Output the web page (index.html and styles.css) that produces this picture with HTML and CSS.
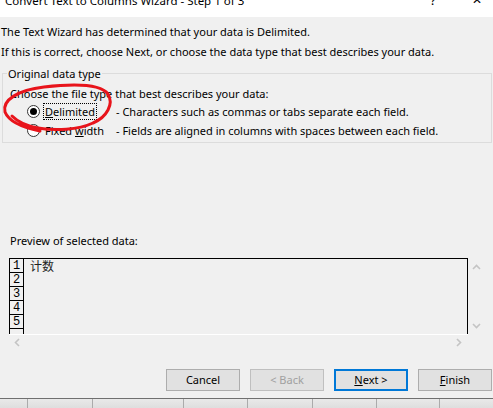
FILE: index.html
```html
<!DOCTYPE html>
<html>
<head>
<meta charset="utf-8">
<link rel="stylesheet" href="styles.css">
</head>
<body>
<div class="screen">
  <div class="dialog">
    <div class="titlebar">
      <span class="title">Convert Text to Columns Wizard - Step 1 of 3</span>
      <span class="tb-btn help">?</span>
      <span class="tb-btn close">✕</span>
    </div>
    <div class="content">
      <p class="intro first">The Text Wizard has determined that your data is Delimited.</p>
      <p class="intro">If this is correct, choose Next, or choose the data type that best describes your data.</p>
      <div class="group">
        <div class="legend">Original data type</div>
        <div class="choose">Choose the file type that best describes your data:</div>
        <div class="radio-row">
          <span class="radio checked"></span>
          <span class="rlabel"><span class="focus"><u>D</u>elimited</span></span>
          <span class="desc">- Characters such as commas or tabs separate each field.</span>
        </div>
        <div class="radio-row">
          <span class="radio"></span>
          <span class="rlabel"><span class="nofocus">Fixed <u>w</u>idth</span></span>
          <span class="desc">- Fields are aligned in columns with spaces between each field.</span>
        </div>
      </div>
      <div class="preview-label">Preview of selected data:</div>
      <div class="preview">
        <div class="pv-box">
          <div class="pv-row"><span class="num">1</span><span class="cell">计数</span></div>
          <div class="pv-row"><span class="num">2</span><span class="cell"></span></div>
          <div class="pv-row"><span class="num">3</span><span class="cell"></span></div>
          <div class="pv-row"><span class="num">4</span><span class="cell"></span></div>
          <div class="pv-row"><span class="num">5</span><span class="cell"></span></div>
          <div class="pv-row partial"><span class="num"></span><span class="cell"></span></div>
        </div>
        <div class="vscroll">
          <svg width="9" height="6" viewBox="0 0 9 6"><path d="M1 5 L4.5 1.5 L8 5" fill="none" stroke="#c4c4c4" stroke-width="1.6"/></svg>
          <svg width="9" height="6" viewBox="0 0 9 6"><path d="M1 1 L4.5 4.5 L8 1" fill="none" stroke="#c4c4c4" stroke-width="1.6"/></svg>
        </div>
        <div class="hscroll">
          <svg width="6" height="9" viewBox="0 0 6 9"><path d="M5 1 L1.5 4.5 L5 8" fill="none" stroke="#c4c4c4" stroke-width="1.6"/></svg>
          <svg width="6" height="9" viewBox="0 0 6 9"><path d="M1 1 L4.5 4.5 L1 8" fill="none" stroke="#c4c4c4" stroke-width="1.6"/></svg>
        </div>
        <div class="corner"></div>
      </div>
      <div class="buttons">
        <button class="btn">Cancel</button>
        <button class="btn disabled">&lt; Back</button>
        <button class="btn default"><u>N</u>ext &gt;</button>
        <button class="btn"><u>F</u>inish</button>
      </div>
    </div>
  </div>
  <div class="sheet">
    <span class="col c0"></span>
    <span class="col c1"></span>
    <span class="col c2"></span>
    <span class="col c3"></span>
    <span class="col c4"></span>
    <span class="col c5"></span>
    <span class="col c6"></span>
    <span class="col c7"></span>
  </div>
  <svg class="annot" width="493" height="408" viewBox="0 0 493 408">
    <path d="M40 131 C25 128 9 122 5 112 C2 100 18 90 44 87 C70 84 100 83 108 94 C114 104 107 117 93 123 C78 130 55 131 38 128 C27 126 18 122 12 116" fill="none" stroke="#e8141b" stroke-width="3" stroke-linecap="round"/>
  </svg>
</div>
</body>
</html>
```
FILE: styles.css
```css
* { box-sizing: border-box; }
html, body { margin: 0; padding: 0; }
body {
  width: 493px;
  height: 408px;
  overflow: hidden;
  background: #f0f0f0;
  font-family: "Noto Sans", "Noto Sans CJK SC", sans-serif;
  font-size: 11px;
  color: #000;
}
.screen {
  position: relative;
  width: 493px;
  height: 408px;
  display: flex;
  flex-direction: column;
}
.dialog {
  height: 399px;
  background: #f0f0f0;
  border-bottom: 1px solid #6f6f6f;
  display: flex;
  flex-direction: column;
}
.titlebar {
  height: 17px;
  background: #fff;
  display: flex;
  align-items: flex-start;
  overflow: hidden;
}
.title {
  margin-top: -9px;
  margin-left: 5px;
  line-height: 20px;
  font-size: 11.5px;
  flex: 1;
}
.tb-btn {
  margin-top: -10px;
  line-height: 20px;
  font-size: 13px;
  color: #000;
}
.help { margin-right: 36px; }
.close { margin-right: 11px; font-size: 12px; }
.content {
  flex: 1;
  display: flex;
  flex-direction: column;
}
.intro {
  margin: 0;
  padding-left: 1px;
  line-height: 20px;
}
.intro.first { margin-top: 5px; }
.group {
  margin: 11px 1px 0 2px;
  height: 70px;
  border: 1px solid #dcdcdc;
  padding-left: 7px;
}
.legend {
  display: block;
  width: max-content;
  margin-top: -8px;
  margin-left: -3px;
  padding: 0 1px;
  line-height: 16px;
  background: #f0f0f0;
}
.choose {
  margin-top: 4px;
  line-height: 16px;
}
.radio-row {
  height: 19px;
  display: flex;
  align-items: center;
}
.radio {
  margin-left: 17px;
  width: 13px;
  height: 13px;
  border-radius: 50%;
  border: 1px solid #333;
  background: #fff;
  display: flex;
  align-items: center;
  justify-content: center;
}
.radio.checked::after {
  content: "";
  width: 7px;
  height: 7px;
  border-radius: 50%;
  background: #000;
}
.rlabel {
  width: 76px;
  padding-left: 3px;
  display: flex;
}
.focus {
  border: 1px dotted #000;
  padding: 0 1px;
  line-height: 15px;
}
.nofocus {
  border: 1px solid transparent;
  padding: 0 1px;
  line-height: 15px;
}
.preview-label {
  margin-top: 90px;
  margin-left: 10px;
  line-height: 16px;
}
.preview {
  margin-top: 9px;
  margin-left: 9px;
  display: grid;
  grid-template-columns: 459px 25px;
  grid-template-rows: 76px 16px;
}
.pv-box {
  border: 1px solid #000;
  border-bottom: none;
  overflow: hidden;
}
.pv-row {
  display: flex;
  height: 14px;
}
.num {
  width: 14px;
  height: 14px;
  border-right: 1px solid #000;
  border-bottom: 1px solid #000;
  font-family: "Liberation Mono", monospace;
  font-size: 12px;
  line-height: 14px;
  text-align: center;
}
.cell {
  padding-left: 6px;
  font-family: "Noto Sans CJK SC", sans-serif;
  font-size: 12px;
  line-height: 14px;
  color: #222;
}
.vscroll {
  display: flex;
  flex-direction: column;
  justify-content: space-between;
  align-items: flex-start;
  padding: 6px 0 5px 4px;
}
.hscroll {
  border-top: 1px solid #fff;
  display: flex;
  justify-content: space-between;
  align-items: center;
  padding: 0 6px 0 5px;
}
.buttons {
  margin-top: 19px;
  display: flex;
  gap: 10px;
  padding-left: 166px;
}
.btn {
  width: 74px;
  height: 22px;
  background: #e1e1e1;
  border: 1px solid #adadad;
  font-family: "Noto Sans", sans-serif;
  font-size: 11px;
  color: #000;
  padding: 0;
  line-height: 18px;
}
.btn.disabled {
  border-color: #bfbfbf;
  color: #a0a0a0;
}
.btn.default {
  border: 2px solid #0078d7;
}
.sheet {
  flex: 1;
  display: flex;
  background: linear-gradient(#e9e9e9, #dedede);
}
.col {
  border-left: 1px solid #ababab;
}
.c0 { width: 27px; border-left: none; }
.c1 { width: 65px; }
.c2 { width: 91px; }
.c3 { width: 64px; }
.c4 { width: 65px; }
.c5 { width: 64px; }
.c6 { width: 63px; }
.c7 { flex: 1; }
.annot {
  position: absolute;
  left: 0;
  top: 0;
  pointer-events: none;
}
```
